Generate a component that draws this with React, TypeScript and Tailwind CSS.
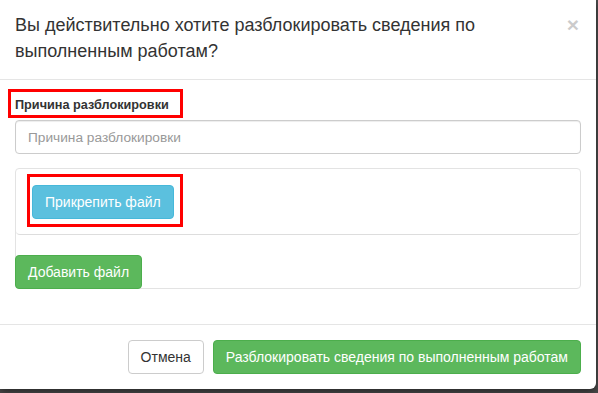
import React from 'react';

const font = { fontFamily: '"Liberation Sans", Arial, sans-serif' };

const App: React.FC = () => (
  <div className="min-h-screen bg-[#4b4b4b] font-['Liberation_Sans',Arial,sans-serif] text-[14px] text-[#333]">
    <div className="relative w-[596px] rounded-br-[6px] bg-white shadow-[0_3px_9px_rgba(0,0,0,0.5)]">
      {/* header */}
      <div className="flex items-start border-b border-[#e5e5e5] px-[15px] pt-[13px] pb-[15px]">
        <h4 className="flex-1 pr-[40px] text-[18px] font-normal leading-[25.7px] text-[#333]">
          Вы действительно хотите разблокировать сведения по выполненным работам?
        </h4>
        <button className="mt-[1px] mr-[2px] text-[21px] font-bold leading-none text-black opacity-20">
          ×
        </button>
      </div>

      {/* body */}
      <div className="px-[15px] pt-[14px] pb-[35px]">
        <div className="mb-[14px]">
          <label className="relative mb-[5px] inline-block text-[12.7px] font-bold leading-[20px] text-[#333]">
            Причина разблокировки
            <span className="absolute -top-[6px] -bottom-[3px] -left-[7px] -right-[14px] border-[3px] border-[#ff0000]" />
          </label>
          <input
            type="text"
            placeholder="Причина разблокировки"
            className="block h-[34px] w-full rounded-[4px] border border-[#ccc] px-[12px] text-[13.7px] text-[#555] shadow-[inset_0_1px_1px_rgba(0,0,0,0.075)] outline-none placeholder:text-[#999]"
            style={font}
          />
        </div>

        <div className="flex flex-col items-start rounded-[4px] border border-[#e3e3e3]">
          <div className="w-full rounded-[4px] border-b border-[#ddd] px-[16px] pt-[16px] pb-[15px]">
            <div className="relative inline-block">
              <button className="rounded-[4px] border border-[#46b8da] bg-[#5bc0de] px-[12px] py-[6px] text-[14px] leading-[20px] text-white">
                Прикрепить файл
              </button>
              <span className="absolute -top-[11px] -bottom-[8px] -left-[5px] -right-[9px] border-[3px] border-[#ff0000]" />
            </div>
          </div>
          <button className="-mb-px -ml-px mt-[20px] rounded-[4px] border border-[#4cae4c] bg-[#5cb85c] px-[12px] py-[6px] text-[14px] leading-[20px] text-white">
            Добавить файл
          </button>
        </div>
      </div>

      {/* footer */}
      <div className="flex justify-end gap-[9px] border-t border-[#e5e5e5] p-[15px]">
        <button className="rounded-[4px] border border-[#ccc] bg-white px-[12px] py-[6px] text-[14px] leading-[20px] text-[#333]">
          Отмена
        </button>
        <button className="rounded-[4px] border border-[#4cae4c] bg-[#5cb85c] px-[12px] py-[6px] text-[14px] leading-[20px] text-white">
          Разблокировать сведения по выполненным работам
        </button>
      </div>
    </div>
  </div>
);

export default App;
